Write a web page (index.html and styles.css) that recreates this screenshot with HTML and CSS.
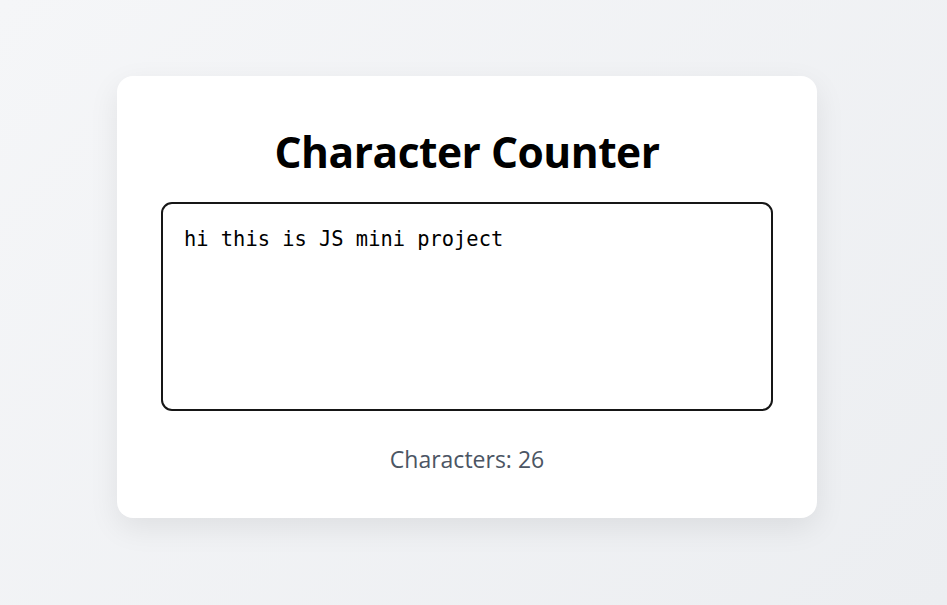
FILE: index.html
```html
<!DOCTYPE html>
<html lang="en">
<head>
<meta charset="utf-8">
<title>Character Counter</title>
<link rel="stylesheet" href="styles.css">
</head>
<body>
<main class="page">
  <section class="card">
    <h1 class="title">Character Counter</h1>
    <textarea class="input" id="text" spellcheck="false">hi this is JS mini project</textarea>
    <p class="count">Characters: <span id="count">26</span></p>
  </section>
</main>
<script src="script.js"></script>
</body>
</html>
```
FILE: styles.css
```css
* { box-sizing: border-box; }
html, body { margin: 0; height: 100%; }
body {
  font-family: "Open Sans", "Noto Sans", sans-serif;
  background: linear-gradient(135deg, #f5f6f8 0%, #eceef1 100%);
}
.page {
  min-height: 100%;
  display: flex;
  justify-content: center;
  padding: 76px 13px 0 0;
}
.card {
  width: 700px;
  height: 442px;
  background: #fff;
  border-radius: 16px;
  box-shadow: 0 10px 30px rgba(0,0,0,0.08);
  padding: 44px 44px;
  display: flex;
  flex-direction: column;
  align-items: stretch;
}
.title {
  margin: 4px 0 0;
  text-align: center;
  font-size: 42.5px;
  font-weight: 700;
  line-height: 56px;
  color: #000;
  letter-spacing: -0.5px;
}
.input {
  flex-shrink: 0;
  margin-top: 22px;
  height: 209px;
  width: 100%;
  border: 2.5px solid #161616;
  border-radius: 11px;
  padding: 22px 21px 19px;
  font-family: "DejaVu Sans Mono", "Liberation Mono", monospace;
  font-size: 20.4px;
  line-height: 1.3;
  resize: none;
  outline: none;
  color: #000;
  caret-color: #000;
}
.count {
  margin: 32px 0 0;
  text-align: center;
  font-size: 23px;
  color: #4b5563;
}
```
FILE: script.js
```js
const text = document.getElementById('text');
const count = document.getElementById('count');
function update() { count.textContent = text.value.length; }
text.addEventListener('input', update);
text.focus();
text.setSelectionRange(text.value.length, text.value.length);
update();
```
